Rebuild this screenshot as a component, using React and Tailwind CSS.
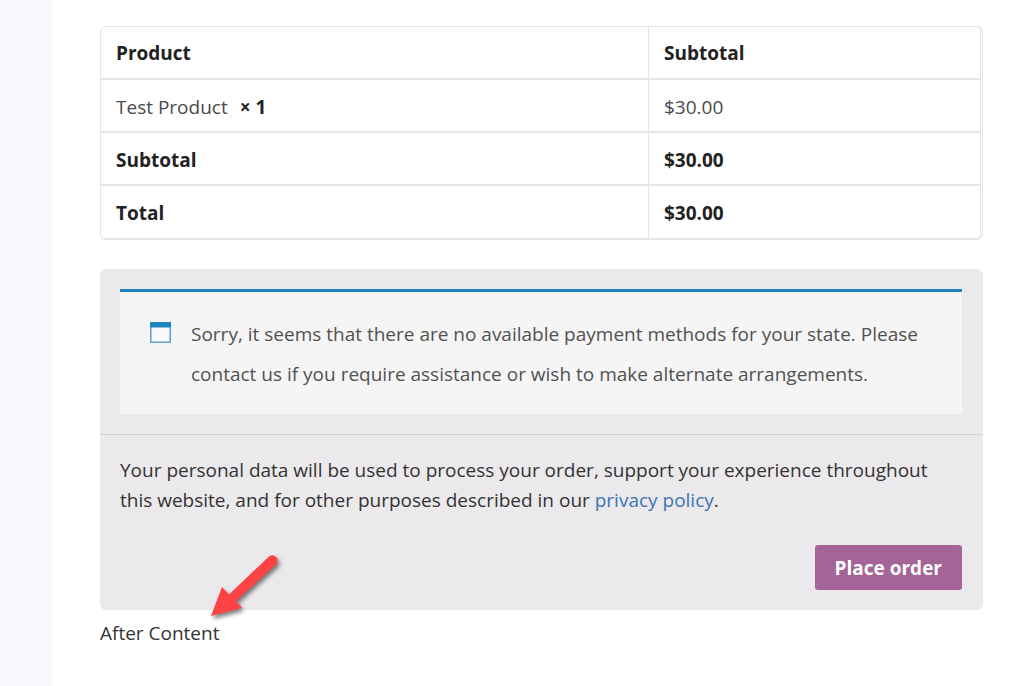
// Order review section of the checkout page
const rows = [
    { label: "Test Product", quantity: 1, amount: "$30.00" },
    { label: "Subtotal", amount: "$30.00", bold: true },
    { label: "Total", amount: "$30.00", bold: true },
];

// Table with the order lines and totals
const OrderTable = () => {
    return (
        <div className="rounded-md border border-[#e5e5e5] pr-px">
            <table className="w-full table-fixed border-separate border-spacing-0 text-left">
                <thead>
                    <tr className="h-[53px] text-[#222]">
                        <th
                            scope="col"
                            className="w-[548px] border-r border-b-2 border-[#e5e5e5] px-[15px] pt-px font-bold"
                        >
                            Product
                        </th>
                        <th
                            scope="col"
                            className="rounded-tr border-r border-b-2 border-[#e5e5e5] px-[15px] pt-px font-bold"
                        >
                            Subtotal
                        </th>
                    </tr>
                </thead>
                <tbody>
                    {rows.map((row) => (
                        <tr
                            key={row.label}
                            className={
                                row.bold
                                    ? "group h-[53px] font-bold text-[#222]"
                                    : "group h-[53px] text-[#4a4a4a]"
                            }
                        >
                            <td className="border-r border-b-2 border-[#e5e5e5] px-[15px] pt-0.5 group-last:border-b">
                                {row.label}
                                {row.quantity && (
                                    <strong className="ml-3 font-bold text-[#222]">
                                        × {row.quantity}
                                    </strong>
                                )}
                            </td>
                            <td className="border-r border-b-2 border-[#e5e5e5] px-[15px] pt-0.5 group-last:rounded-br group-last:border-b">
                                {row.amount}
                            </td>
                        </tr>
                    ))}
                </tbody>
            </table>
        </div>
    );
};

// Small window icon in front of the notice
const NoticeIcon = () => {
    return (
        <svg
            className="mt-2 h-[21px] w-[21px] shrink-0"
            viewBox="0 0 21 21"
            aria-hidden="true"
        >
            <rect x="0.75" y="0.75" width="19.5" height="19.5" rx="0.5" fill="#f9f9fb" stroke="#5b9fd0" strokeWidth="1.5" />
            <rect x="0" y="0" width="21" height="5.5" rx="0.5" fill="#1e85be" />
        </svg>
    );
};

// Payment box: notice, privacy text and submit button
const Payment = () => {
    return (
        <section className="rounded-md bg-[#ebe9eb]">
            <div className="border-b border-[#d3d1d4] py-5 pr-[21px] pl-5">
                <div className="flex gap-5 border-t-[3px] border-[#1e85be] bg-[#f6f5f6] px-[30px] pt-[22px] pb-5 text-[#515151]">
                    <NoticeIcon />
                    <p className="leading-10">
                        Sorry, it seems that there are no available payment
                        methods for your state. Please contact us if you
                        require assistance or wish to make alternate
                        arrangements.
                    </p>
                </div>
            </div>
            <div className="py-5 pr-[21px] pl-5">
                <p className="text-[#333]">
                    Your personal data will be used to process your order,
                    support your experience throughout this website, and for
                    other purposes described in our{" "}
                    <a href="#privacy" className="text-[#3c74b5]">
                        privacy policy
                    </a>
                    .
                </p>
                <div className="mt-[30px] flex justify-end">
                    <button
                        type="button"
                        className="h-[45px] rounded-[3px] bg-[#a46497] px-5 font-bold text-white"
                    >
                        Place order
                    </button>
                </div>
            </div>
        </section>
    );
};

// Red arrow pointing at the text under the box
const Arrow = () => {
    return (
        <svg
            className="absolute -top-[57px] left-[104px] h-[76px] w-[84px]"
            viewBox="0 0 84 76"
            aria-hidden="true"
        >
            <path
                d="M7 62 L18 33 L25 40.5 L65 2.5 Q69.5 -0.5 73 4 Q75 8 71 11.5 L32 47 L38 54 Z"
                transform="translate(0 1)"
                fill="#fd4343"
                className="drop-shadow-[2px_3px_2px_rgba(0,0,0,0.5)]"
            />
        </svg>
    );
};

const App = () => {
    return (
        <div className="flex min-h-screen bg-[#f7f8fb] pl-[52px] font-['Open_Sans','Noto_Sans',sans-serif] text-[19px] leading-[30px]">
            <main className="min-w-0 flex-1 bg-white pt-[26px] pr-[41px] pb-8 pl-12">
                <OrderTable />
                <div className="mt-[29px]">
                    <Payment />
                </div>
                <div className="relative pt-2 text-[#333]">
                    <p>After Content</p>
                    <Arrow />
                </div>
            </main>
        </div>
    );
};

export default App;
